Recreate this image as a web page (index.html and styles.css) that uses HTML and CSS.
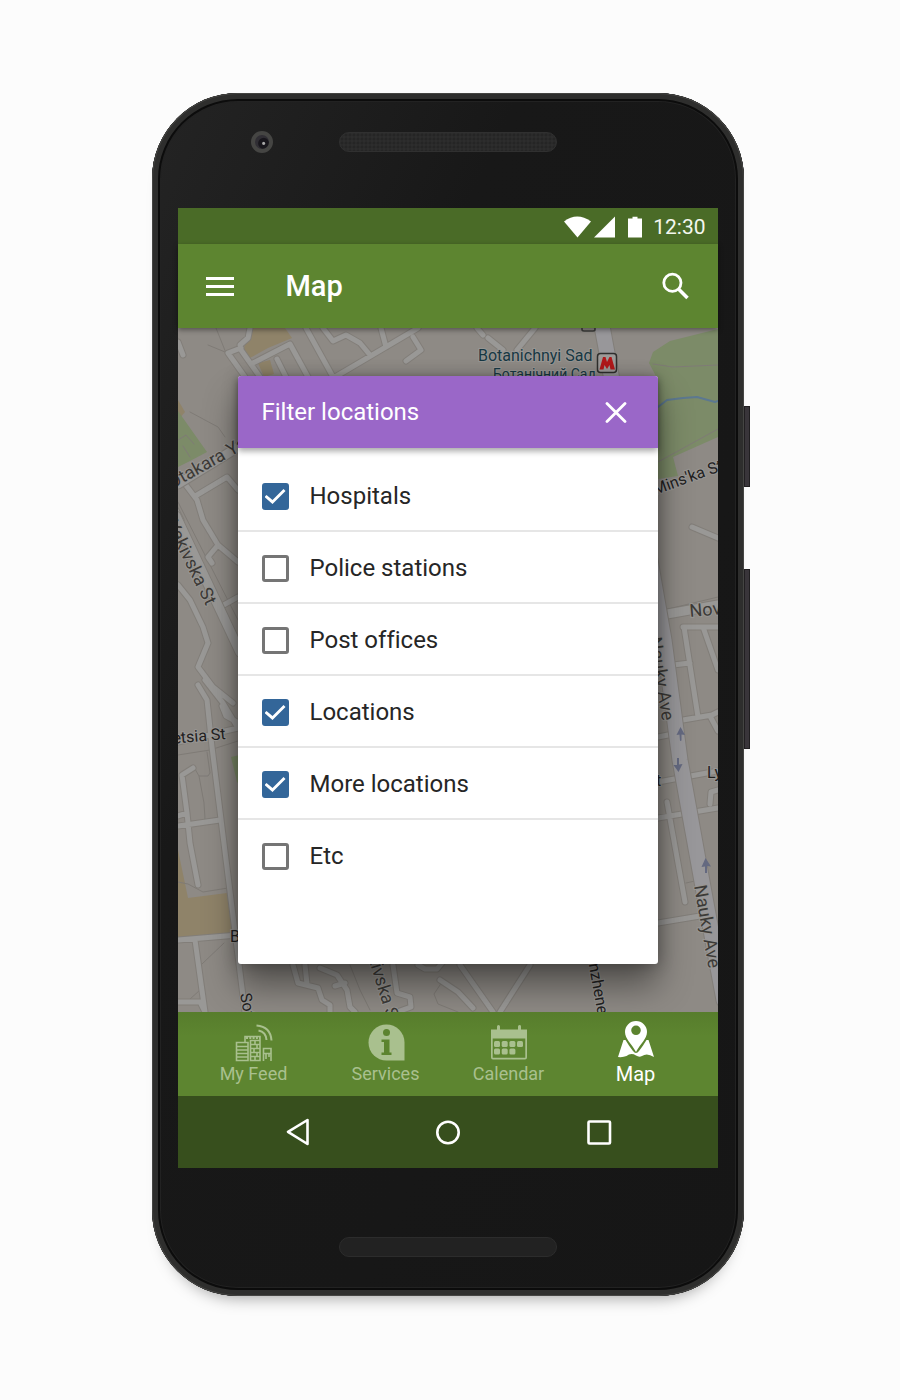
FILE: index.html
```html
<!DOCTYPE html>
<html lang="en">
<head>
<meta charset="utf-8">
<meta name="viewport" content="width=device-width, initial-scale=1">
<title>Map – Filter locations</title>
<link rel="stylesheet" href="styles.css">
</head>
<body>
<div class="phone">
  <span class="side-key side-key-power"></span>
  <span class="side-key side-key-volume"></span>
  <div class="bezel bezel-top">
    <span class="camera"></span>
    <span class="speaker"></span>
  </div>

  <div class="screen">
    <div class="status-bar">
      <svg class="status-signal" viewBox="0 0 80 24" width="80" height="24" fill="#fff" aria-hidden="true">
        <path d="M1 6.500Q14-3.500 28 6.500L14.500 22.500Z"/>
        <path d="M31 22.500L52 1.500V22.500Z"/>
        <path d="M65 3.500H69.500V1.800H74.500V3.500H79V22.500H65Z"/>
      </svg>
      <time>12:30</time>
    </div>

    <header class="app-bar">
      <button class="icon-button" type="button" aria-label="Menu">
        <svg viewBox="0 0 28 20" width="28" height="20" stroke="#fff" stroke-width="2.800" aria-hidden="true"><path d="M0 2.500H28M0 10.500H28M0 18.500H28"/></svg>
      </button>
      <h1>Map</h1>
      <button class="icon-button" type="button" aria-label="Search">
        <svg viewBox="0 0 28 28" width="28" height="28" fill="none" stroke="#fff" aria-hidden="true"><circle cx="10.400" cy="10.800" r="8.600" stroke-width="2.800"/><path d="M16.500 17L25.500 26" stroke-width="3.600"/></svg>
      </button>
    </header>

    <main class="content">
      <svg class="map" viewBox="178 328 540 684" preserveAspectRatio="xMidYMid slice" aria-hidden="true">
        <defs>
          <path id="lanes" d="M178 342L183 355M250 328L248 338L240 345L241 350L260 377M245 377L228 353L241 348M253 363L290 344L308 377M277 359L286 377M306 328L333 377M323 328L333 341L346 335L360 343L370 355M335 377L418 328M381 328L386 347M413 337L421 350L406 361M477 328L483 335M488 338L503 350M535 328L517 350M182 480L197 500L203 520L218 545L238 562M197 495L227 477L238 490M218 545L208 557L212 563M176 510L181 520M220 607L238 597M178 585L190 600L203 627L208 643L198 667L213 687L233 703M198 685L207 700L212 747L245 1012M205 680L223 703L238 728M222 706L226 716L237 722M178 742L238 728M193 768L182 775L187 813L190 843L198 885M178 826L220 820M178 816L187 813M178 940L238 935M195 940L205 1012M178 1002L200 1002L205 1012M692 527L718 538M683 627H718M684 627L698 717M703 627L718 670M673 665L690 663M683 720L712 715L718 712M710 716L718 731M658 782L718 771M658 818L718 808M667 802L685 902M658 923L700 916M658 737L678 733M710 804L711 792L718 790M293 965L298 983L318 988L322 1000L330 1005V1012M305 965L307 984M320 968L337 975L347 990L350 1007L355 1012M335 986L345 983M393 965L397 993L410 997L411 1007L397 1012M418 965L425 969H437L442 963M440 980L458 992L473 1008M460 965L493 1012M530 965L500 1012"/>
          <path id="streets" d="M176 516L240 652M178 484L240 446M656 616L718 605"/>
          <path id="avenues" d="M650 560L664 640L680 760L703 887L724 1000M602 326L612 380"/>
        </defs>
        <rect class="land" x="178" y="328" width="540" height="684"/>
        <g class="sand">
          <path d="M243 350L252 328H285L292 338L268 348L250 358Z"/>
          <path d="M258 363L270 360L274 374L264 377Z"/>
          <path d="M178 850L188 898L227 893L232 933L178 938Z"/>
          <path d="M178 400L185 412L178 420Z"/>
        </g>
        <g class="park">
          <path d="M178 411L207 452L190 461L178 467Z"/>
          <path d="M649 363L653 352L670 341L718 329V437L673 457L678 476L658 479V380Z"/>
          <path d="M231 757L240 755V785L237 782Z"/>
        </g>
        <path class="trail" d="M208 345L225 352M216 328L226 353M190 412L218 427L225 437M653 364L673 367L718 365M658 462L718 429M178 755L210 750L238 741M195 769L199 776H208L210 773L207 752M199 776L204 803L205 819M178 882L188 884L203 892L228 888M202 964L224 943M189 1000L200 990M178 502L238 620M178 440L186 435L194 444M183 446L190 457M660 611L718 597M686 883L695 881M350 965L360 990L370 1010M442 982L434 994L438 1004L458 1012M658 575L663 607"/>
        <path class="river" d="M658 407L667 400L683 398L697 397L715 402L718 401"/>
        <use class="road-edge" href="#lanes"/>
        <use class="road" href="#lanes"/>
        <use class="street-edge" href="#streets"/>
        <use class="street" href="#streets"/>
        <use class="avenue-edge" href="#avenues"/>
        <use class="avenue" href="#avenues"/>
        <g class="arrows">
          <path d="M680 741L681.500 740.500V734.500L685 735L680.500 727L676.500 735L679.500 734.500Z"/>
          <path d="M677 758H679V764.500L682.500 764L678.500 772L673.500 765L677 765Z"/>
          <path d="M705 873H707V866L711 866.500L705.500 858L701.500 867L705 866.500Z"/>
        </g>
        <g class="station">
          <path d="M582 326V329.500Q582 331 584 331H593Q595 331 595 329.500V326" fill="none" stroke="#3c3c3a" stroke-width="1.500"/>
          <rect x="597.500" y="353.500" width="19" height="19" rx="3" fill="#9c9a98" stroke="#2f2f2d" stroke-width="1.500"/>
          <path d="M599.500 369.500L603 357H605.500L607 362L609.500 357H611.500L615 369.500H610.500L609.500 365L607 369L604.500 365L603.500 369.500Z" fill="#b0181a"/>
        </g>
        <g class="map-labels">
          <text class="place" x="478" y="361">Botanichnyi Sad</text>
          <text class="place-small" x="493" y="379">Ботанічний Сад</text>
          <text transform="translate(172 489) rotate(-29)">Otakara Yarosha</text>
          <text transform="translate(166 524) rotate(64)">Yakivska St</text>
          <text class="dark" transform="translate(655 495) rotate(-20)">Mins'ka St</text>
          <text transform="translate(690 617) rotate(-5)">Nov</text>
          <text transform="translate(649 638) rotate(81)">Nauky Ave</text>
          <text transform="translate(694 886) rotate(80)">Nauky Ave</text>
          <text class="dark" transform="translate(169 744) rotate(-5)">letsia St</text>
          <text class="dark" x="707" y="778">Ly</text>
          <text class="dark" x="656" y="786">t</text>
          <text class="dark" x="230" y="942">B</text>
          <text class="dark" transform="translate(240 994) rotate(80)">Sofii</text>
          <text transform="translate(368 957) rotate(73)">kivska St</text>
          <text class="dark" transform="translate(588 960) rotate(80)">Inzhenerna</text>
        </g>
      </svg>

      <section class="dialog" role="dialog" aria-labelledby="dialog-title">
        <header class="dialog-header">
          <h2 id="dialog-title">Filter locations</h2>
          <button class="icon-button" type="button" aria-label="Close">
            <svg viewBox="0 0 22 22" width="22" height="22" stroke="#fff" stroke-width="2.800" stroke-linecap="round" aria-hidden="true"><path d="M2 2.500L20 20.500M20 2.500L2 20.500"/></svg>
          </button>
        </header>
        <ul class="filters">
          <li><label><input type="checkbox" checked>Hospitals</label></li>
          <li><label><input type="checkbox">Police stations</label></li>
          <li><label><input type="checkbox">Post offices</label></li>
          <li><label><input type="checkbox" checked>Locations</label></li>
          <li><label><input type="checkbox" checked>More locations</label></li>
          <li><label><input type="checkbox">Etc</label></li>
        </ul>
      </section>
    </main>

    <nav class="tabs">
      <a class="tab" href="#feed">
        <svg viewBox="0 0 38 38" width="38" height="38" fill="none" stroke="currentColor" stroke-width="1.600" aria-hidden="true">
          <path d="M1.500 18.500H13V36.500H1.500ZM1.500 22.500H13M1.500 26H13M1.500 29.500H13M1.500 33H13"/>
          <path d="M10 18V12.500H25V36.500H15.500V16.500H25M15.500 20.500H25M15.500 24.500H25M15.500 28.500H25M15.500 32.500H25M20 16.500V20.500M22 20.500V24.500M19 24.500V28.500M22 28.500V32.500M20 32.500V36.500"/>
          <path d="M11 13.500H25" stroke-width="3" stroke-dasharray="2 1.300"/>
          <path d="M28.500 37V24.500H36V37M28.500 29.500H36M31 29.500V35M34 29.500V33"/>
          <path d="M21.500 1.500Q35.500 2.500 36.500 16.500M23.500 6.500Q31 8 31.500 16" stroke-width="2"/>
        </svg>
        <span>My Feed</span>
      </a>
      <a class="tab" href="#services">
        <svg viewBox="0 0 38 38" width="38" height="38" aria-hidden="true">
          <path d="M19.500 .5A18 18 0 0 1 37.500 18.500V36.500H19.500A18 18 0 0 1 19.500 .5Z" fill="currentColor"/>
          <circle cx="19.500" cy="8.500" r="3.500" fill="#5c832f"/>
          <path d="M14.500 15.500H22.500V28.500H24.500V31H14.500V28.500H17V18H14.500Z" fill="#5c832f"/>
        </svg>
        <span>Services</span>
      </a>
      <a class="tab" href="#calendar">
        <svg viewBox="0 0 38 38" width="38" height="38" fill="currentColor" aria-hidden="true">
          <path d="M1 5.500H7V2.500A1.500 1.500 0 0 1 10 2.500V5.500H28V2.500A1.500 1.500 0 0 1 31 2.500V5.500H37V33.500A2 2 0 0 1 35 35.500H3A2 2 0 0 1 1 33.500ZM2.700 14.500V33.800H35.300V14.500Z" fill-rule="evenodd"/>
          <g><rect x="4" y="17" width="6" height="6" rx="1.500"/><rect x="11.700" y="17" width="6" height="6" rx="1.500"/><rect x="19.400" y="17" width="6" height="6" rx="1.500"/><rect x="27" y="17" width="6" height="6" rx="1.500"/><rect x="4" y="24.500" width="6" height="6" rx="1.500"/><rect x="11.700" y="24.500" width="6" height="6" rx="1.500"/><rect x="19.400" y="24.500" width="6" height="6" rx="1.500"/></g>
        </svg>
        <span>Calendar</span>
      </a>
      <a class="tab tab-active" href="#map" aria-current="page">
        <svg viewBox="0 0 38 38" width="38" height="38" fill="currentColor" aria-hidden="true">
          <path d="M19 1A11 11 0 0 1 30 12C30 19 23 24 19 32C15 24 8 19 8 12A11 11 0 0 1 19 1ZM19 5.500A4.800 4.800 0 1 0 19 15.100A4.800 4.800 0 1 0 19 5.500Z" fill-rule="evenodd"/>
          <path d="M6.500 20H8.500Q12 26 16 31Q19 35 22 31Q26 26 29.500 20H31.500L37 37Q30 32.500 25 36Q22 37.500 19 35.500Q14 32.500 9.500 36Q6 37.500 1 37Z"/>
        </svg>
        <span>Map</span>
      </a>
    </nav>

    <div class="system-nav">
      <button type="button" aria-label="Back"><svg viewBox="0 0 28 28" width="28" height="28" stroke-width="2.600" aria-hidden="true"><path d="M23.500 2V26L4 13.800Z"/></svg></button>
      <button type="button" aria-label="Home"><svg viewBox="0 0 28 28" width="28" height="28" stroke-width="2.600" aria-hidden="true"><circle cx="14" cy="14.500" r="10.700"/></svg></button>
      <button type="button" aria-label="Recent apps"><svg viewBox="0 0 28 28" width="28" height="28" stroke-width="2.600" aria-hidden="true"><rect x="4.500" y="3.500" width="21.500" height="22" rx="1"/></svg></button>
    </div>
  </div>

  <div class="bezel bezel-bottom">
    <span class="speaker speaker-low"></span>
  </div>
</div>
</body>
</html>
```

FILE: styles.css
```css
* {
  box-sizing: border-box;
}

body {
  margin: 0;
  padding: 93px 5px 96px 0;
  background: #fcfcfc;
  color: #262626;
  font-family: Roboto, "Liberation Sans", sans-serif;
  font-variant-ligatures: none;
}

button {
  padding: 0;
  border: 0;
  background: none;
  font: inherit;
  cursor: pointer;
}

svg {
  display: block;
}

/* Handset */
.phone {
  position: relative;
  max-width: 592px;
  margin: 0 auto;
  padding: 0 26px;
  border-radius: 86px;
  background: linear-gradient(115deg, #242424 0%, #181818 32%, #161616 100%);
  box-shadow:
    inset 0 0 0 1px #454543,
    inset 0 0 0 6px #2e2e2d,
    inset 0 0 0 8px #0c0c0c,
    inset 0 0 0 9px #222,
    0 14px 16px -12px rgba(0, 0, 0, 0.36);
}

.side-key {
  position: absolute;
  left: 100%;
  width: 6px;
  background: #39353a;
  border: 1px solid #211f21;
}

.side-key-power {
  top: 313px;
  height: 81px;
}

.side-key-volume {
  top: 476px;
  height: 180px;
}

.bezel {
  display: grid;
  grid-template-columns: 1fr 218px 1fr;
  align-items: center;
}

.bezel-top {
  padding: 38px 0 55px;
}

.bezel-bottom {
  padding: 69px 0 39px;
}

.camera {
  justify-self: center;
  width: 22px;
  height: 22px;
  margin-left: 8px;
  border: 4px solid #454543;
  border-radius: 50%;
  background: radial-gradient(circle at 62% 60%, #aaa 0 1px, #18161c 2px 5px, #302e34 6px);
}

.speaker {
  grid-column: 2;
  height: 20px;
  border: 1px solid #303030;
  border-radius: 10px;
  background: radial-gradient(circle, #252525 1px, #2d2d2d 2px) 0 0 / 4px 4px;
}

.speaker-low {
  background: #222;
  border-color: #2c2c2c;
}

.screen {
  display: flex;
  flex-direction: column;
}

/* Top bars */
.status-bar {
  display: flex;
  align-items: center;
  justify-content: flex-end;
  gap: 10px;
  height: 36px;
  padding: 1px 12px 0 0;
  background: #4a6b27;
  color: #f4f7ef;
}

.status-bar time {
  font-size: 21px;
  line-height: 24px;
}

.app-bar {
  position: relative;
  z-index: 1;
  display: flex;
  align-items: center;
  height: 84px;
  padding: 0 28px;
  background: #5d8530;
  color: #fff;
  box-shadow: 0 2px 5px rgba(0, 0, 0, 0.4);
}

.app-bar h1 {
  flex: 1;
  margin: 0 0 0 52px;
  font-size: 29px;
  font-weight: 500;
  line-height: 36px;
}

/* Map area */
.content {
  position: relative;
  padding: 48px 60px;
}

.map {
  position: absolute;
  inset: 0;
  width: 100%;
  height: 100%;
}

.land { fill: #8e8a85; }
.sand { fill: #8f8369; }
.park { fill: #7c8b68; }

.trail,
.river,
.road,
.road-edge,
.street,
.street-edge,
.avenue,
.avenue-edge {
  fill: none;
  stroke-linecap: round;
  stroke-linejoin: round;
}

.trail { stroke: #7f7b76; stroke-width: 1px; }
.river { stroke: #5c7890; stroke-width: 2px; }
.road-edge { stroke: #827e79; stroke-width: 7px; }
.road { stroke: #999896; stroke-width: 5px; }
.street-edge { stroke: #827e79; stroke-width: 11px; }
.street { stroke: #999896; stroke-width: 9px; }
.avenue-edge { stroke: #827e79; stroke-width: 17px; }
.avenue { stroke: #98979a; stroke-width: 15px; }
.arrows { fill: #646980; }

.map-labels {
  fill: #3c3a37;
  font-size: 18px;
  paint-order: stroke;
  stroke: #989693;
  stroke-width: 2px;
}

.map-labels .dark { fill: #22211f; font-size: 16px; }
.map-labels .place { fill: #173843; font-size: 16px; }
.map-labels .place-small { fill: #173843; font-size: 14px; }

/* Filter dialog */
.dialog {
  position: relative;
  min-height: 588px;
  border-radius: 3px;
  background: #fff;
  box-shadow: 0 22px 34px rgba(0, 0, 0, 0.42), 0 0 16px rgba(0, 0, 0, 0.28);
}

.dialog-header {
  display: flex;
  align-items: center;
  justify-content: space-between;
  height: 72px;
  padding: 0 31px 0 24px;
  border-radius: 3px 3px 0 0;
  background: #9a67c8;
  color: #fff;
  box-shadow: 0 3px 6px rgba(0, 0, 0, 0.36);
}

.dialog-header h2 {
  margin: 0;
  font-size: 24px;
  font-weight: 400;
  line-height: 32px;
}

.filters {
  margin: 0;
  padding: 12px 0 0;
  list-style: none;
}

.filters li {
  height: 72px;
  border-bottom: 2px solid #e6e6e6;
}

.filters li:last-child {
  border-bottom: 0;
}

.filters label {
  display: flex;
  align-items: center;
  gap: 21px;
  height: 72px;
  padding: 0 24px;
  font-size: 24px;
}

.filters input {
  appearance: none;
  width: 27px;
  height: 27px;
  margin: 1px 0 0;
  border: 3px solid #757575;
  border-radius: 3px;
  background: #fff;
}

.filters input:checked {
  border-color: #336699;
  background: #336699;
}

.filters input:checked::before {
  content: "";
  display: block;
  width: 21px;
  height: 21px;
  background: #fff;
  clip-path: polygon(0 11px, 2px 9px, 8px 14px, 19px 3px, 21px 5px, 8px 18px);
}

/* Bottom bars */
.tabs {
  position: relative;
  display: grid;
  grid-template-columns: 132fr 132fr 114fr 140fr;
  height: 84px;
  padding: 12px 12px 0 10px;
  background: linear-gradient(#577d2c, #5d8530 24px);
}

.tab {
  display: flex;
  flex-direction: column;
  align-items: center;
  color: #a9c08e;
  font-size: 18px;
  line-height: 24px;
  text-decoration: none;
}

.tab-active {
  margin-top: -4px;
  color: #fff;
  font-size: 20px;
  line-height: 32px;
}

.system-nav {
  display: grid;
  grid-template-columns: repeat(3, 1fr);
  height: 72px;
  padding: 0 45px;
  background: #374f1d;
}

.system-nav button {
  display: grid;
  place-items: center;
}

.system-nav svg {
  fill: none;
  stroke: #fff;
  stroke-linejoin: round;
}
```
